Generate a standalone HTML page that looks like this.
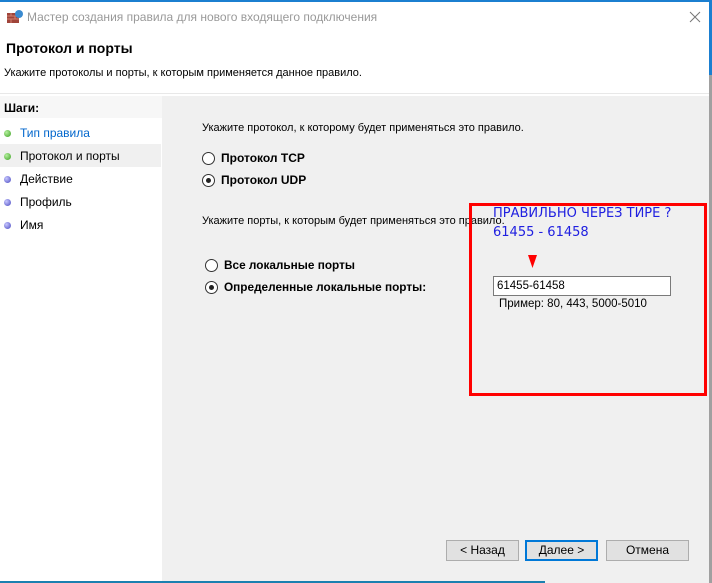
<!DOCTYPE html>
<html><head><meta charset="utf-8"><style>
*{margin:0;padding:0;box-sizing:border-box}
body{width:712px;height:583px;overflow:hidden;background:#fff;font-family:"Liberation Sans",sans-serif;font-size:12px;color:#000;position:relative}
.a{position:absolute;white-space:nowrap}
.radio{position:absolute;width:13px;height:13px;border:1px solid #333;border-radius:50%;background:#fff}
.radio.on::after{content:"";position:absolute;left:3px;top:3px;width:5px;height:5px;border-radius:50%;background:#222}
.dot{position:absolute;left:4px;width:7px;height:7px;border-radius:50%}
.g{background:radial-gradient(circle at 35% 35%,#b6f0a0,#3aa020)}
.b{background:radial-gradient(circle at 35% 35%,#c8c8ff,#4848c0)}
.btn{position:absolute;height:21px;border:1px solid #adadad;background:#e1e1e1;text-align:center;line-height:19px;font-size:12px}
</style></head><body>
<div class="a" style="left:0;top:0;width:712px;height:2px;background:#1b7fd0"></div>
<div class="a" style="left:709px;top:0;width:3px;height:75px;background:#1b7fd0"></div>
<div class="a" style="left:709px;top:75px;width:3px;height:508px;background:#a0a0a0"></div>
<svg class="a" style="left:7px;top:9px" width="16" height="14"><rect x="0" y="4" width="12" height="10" fill="#a0443a"/><path d="M0 7h12M0 10h12M4 4v3M8 7v3M4 10v4" stroke="#d08070" stroke-width="1"/><circle cx="12" cy="5" r="4" fill="#3a8ad0"/></svg>
<div class="a" style="left:27px;top:10px;font-size:12px;color:#999">Мастер создания правила для нового входящего подключения</div>
<svg class="a" style="left:689px;top:11px" width="12" height="12"><path d="M1 1L11 11M11 1L1 11" stroke="#777" stroke-width="1"/></svg>
<div class="a" style="left:6px;top:40px;font-size:14px;font-weight:bold">Протокол и порты</div>
<div class="a" style="left:4px;top:67px;font-size:11px">Укажите протоколы и порты, к которым применяется данное правило.</div>
<div class="a" style="left:0;top:93px;width:709px;height:1px;background:#e8e8e8"></div>
<div class="a" style="left:0;top:96px;width:162px;height:22px;background:#f7f7f7"></div>
<div class="a" style="left:4px;top:101px;font-weight:bold;font-size:12px">Шаги:</div>
<div class="a" style="left:162px;top:96px;width:3px;height:487px;background:#f0f0f0"></div>
<div class="a" style="left:165px;top:96px;width:544px;height:487px;background:#f0f0f0"></div>
<div class="a" style="left:0;top:144px;width:161px;height:23px;background:#f0f0f0"></div>
<div class="dot g" style="top:130px"></div><div class="a" style="left:20px;top:126px;color:#0066cc">Тип правила</div>
<div class="dot g" style="top:153px"></div><div class="a" style="left:20px;top:149px">Протокол и порты</div>
<div class="dot b" style="top:176px"></div><div class="a" style="left:20px;top:172px">Действие</div>
<div class="dot b" style="top:199px"></div><div class="a" style="left:20px;top:195px">Профиль</div>
<div class="dot b" style="top:222px"></div><div class="a" style="left:20px;top:218px">Имя</div>
<div class="a" style="left:202px;top:122px;font-size:11px">Укажите протокол, к которому будет применяться это правило.</div>
<div class="radio" style="left:202px;top:152px"></div><div class="a" style="left:221px;top:151px;font-weight:bold">Протокол TCP</div>
<div class="radio on" style="left:202px;top:174px"></div><div class="a" style="left:221px;top:173px;font-weight:bold">Протокол UDP</div>
<div class="a" style="left:202px;top:215px;font-size:11px">Укажите порты, к которым будет применяться это правило.</div>
<div class="radio" style="left:205px;top:259px"></div><div class="a" style="left:224px;top:258px;font-weight:bold;font-size:11.8px">Все локальные порты</div>
<div class="radio on" style="left:205px;top:281px"></div><div class="a" style="left:224px;top:280px;font-weight:bold;font-size:11.8px">Определенные локальные порты:</div>
<div class="a" style="left:493px;top:276px;width:178px;height:20px;background:#fff;border:1px solid #7a7a7a;padding-left:3px;line-height:18px;font-size:11.5px">61455-61458</div>
<div class="a" style="left:499px;top:298px;font-size:11.5px">Пример: 80, 443, 5000-5010</div>
<div class="a" style="left:469px;top:203px;width:238px;height:193px;border:3px solid #ff0000"></div>
<div class="a" style="left:493px;top:206px;color:#2020e0;font-size:13px;font-family:'DejaVu Sans',sans-serif">ПРАВИЛЬНО ЧЕРЕЗ ТИРЕ ?</div>
<div class="a" style="left:493px;top:225px;color:#2020e0;font-size:13px;font-family:'DejaVu Sans',sans-serif">61455 - 61458</div>
<svg class="a" style="left:528px;top:255px" width="10" height="14"><path d="M0 0H9L4.5 13Z" fill="#ff0000"/></svg>
<div class="btn" style="left:446px;top:540px;width:73px">&lt; Назад</div>
<div class="btn" style="left:525px;top:540px;width:73px;border:2px solid #0078d7;line-height:17px">Далее &gt;</div>
<div class="btn" style="left:606px;top:540px;width:83px">Отмена</div>
<div class="a" style="left:0;top:581px;width:545px;height:2px;background:#1b80b0"></div>
</body></html>
